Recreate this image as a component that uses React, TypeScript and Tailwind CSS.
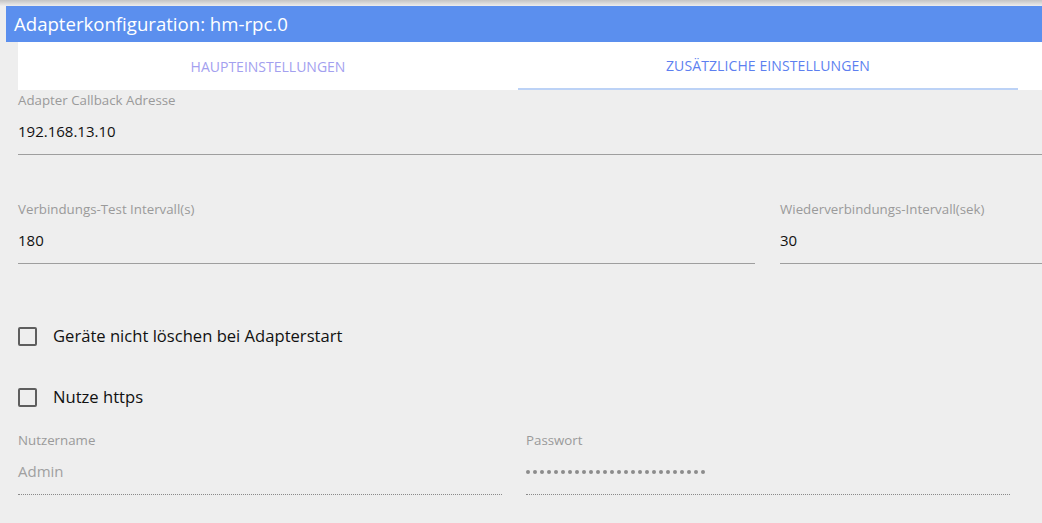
import React from "react";

const font = { fontFamily: '"Open Sans", "Noto Sans", Arial, sans-serif' };

function Field({ label, value, muted, dotted, className }: { label: string; value: string; muted?: boolean; dotted?: boolean; className?: string }) {
  return (
    <div className={"flex flex-col " + (className ?? "")}>
      <div className="h-[20px] text-[13.3px] leading-[20px] text-[#9a9a9a]">{label}</div>
      <div className={"h-[44px] pt-[10px] text-[15px] leading-[22px] " + (muted ? "text-[#a0a0a0]" : "text-[#111]")}>{value}</div>
      <div className={dotted ? "border-b border-dotted border-[#8a8a8a]" : "h-px bg-[#9e9e9e]"} />
    </div>
  );
}

function Check({ label }: { label: string }) {
  return (
    <div className="flex items-center h-[20px]">
      <div className="w-[19px] h-[19px] border-2 border-[#5e5e5e] rounded-[2px]" />
      <span className="ml-[16px] text-[16.6px] text-[#111]">{label}</span>
    </div>
  );
}

export default function App() {
  return (
    <div style={font} className="w-[1042px] h-[523px] bg-[#eeeeee] overflow-hidden">
      <div className="h-[6px] bg-gradient-to-b from-[#c4c4c4] to-[#ededed]" />
      <div className="ml-[6px] h-[36px] bg-[#5b8fee] flex items-center pl-[8px] text-white text-[18.6px]">
        Adapterkonfiguration: hm-rpc.0
      </div>
      <div className="ml-[18px] h-[48px] bg-white flex">
        <div className="w-[500px] flex items-center justify-center text-[14px] text-[#a3a0ef]">
          HAUPTEINSTELLUNGEN
        </div>
        <div className="w-[500px] flex flex-col">
          <div className="flex-1 flex items-center justify-center text-[14px] tracking-[0.1px] text-[#5d7ff0]">
            ZUSÄTZLICHE EINSTELLUNGEN
          </div>
          <div className="h-[2px] bg-[#bcd2f6]" />
        </div>
      </div>
      <div className="pl-[18px]">
        <Field label="Adapter Callback Adresse" value="192.168.13.10" />
        <div className="flex mt-[44px]">
          <Field className="w-[737px]" label="Verbindungs-Test Intervall(s)" value="180" />
          <Field className="ml-[25px] flex-1" label="Wiederverbindungs-Intervall(sek)" value="30" />
        </div>
        <div className="mt-[62px]">
          <Check label="Geräte nicht löschen bei Adapterstart" />
        </div>
        <div className="mt-[41px]">
          <Check label="Nutze https" />
        </div>
        <div className="flex mt-[23px]">
          <Field className="w-[484px]" label="Nutzername" value="Admin" muted dotted />
          <div className="ml-[24px] w-[484px] flex flex-col">
            <div className="h-[20px] text-[13.3px] leading-[20px] text-[#9a9a9a]">Passwort</div>
            <div className="h-[44px] pt-[10px] pb-[10px] flex items-center gap-[3px]">
              {Array.from({ length: 26 }).map((_, i) => (
                <span key={i} className="w-[4px] h-[4px] rounded-full bg-[#8c8c8c]" />
              ))}
            </div>
            <div className="border-b border-dotted border-[#8a8a8a]" />
          </div>
        </div>
      </div>
    </div>
  );
}
